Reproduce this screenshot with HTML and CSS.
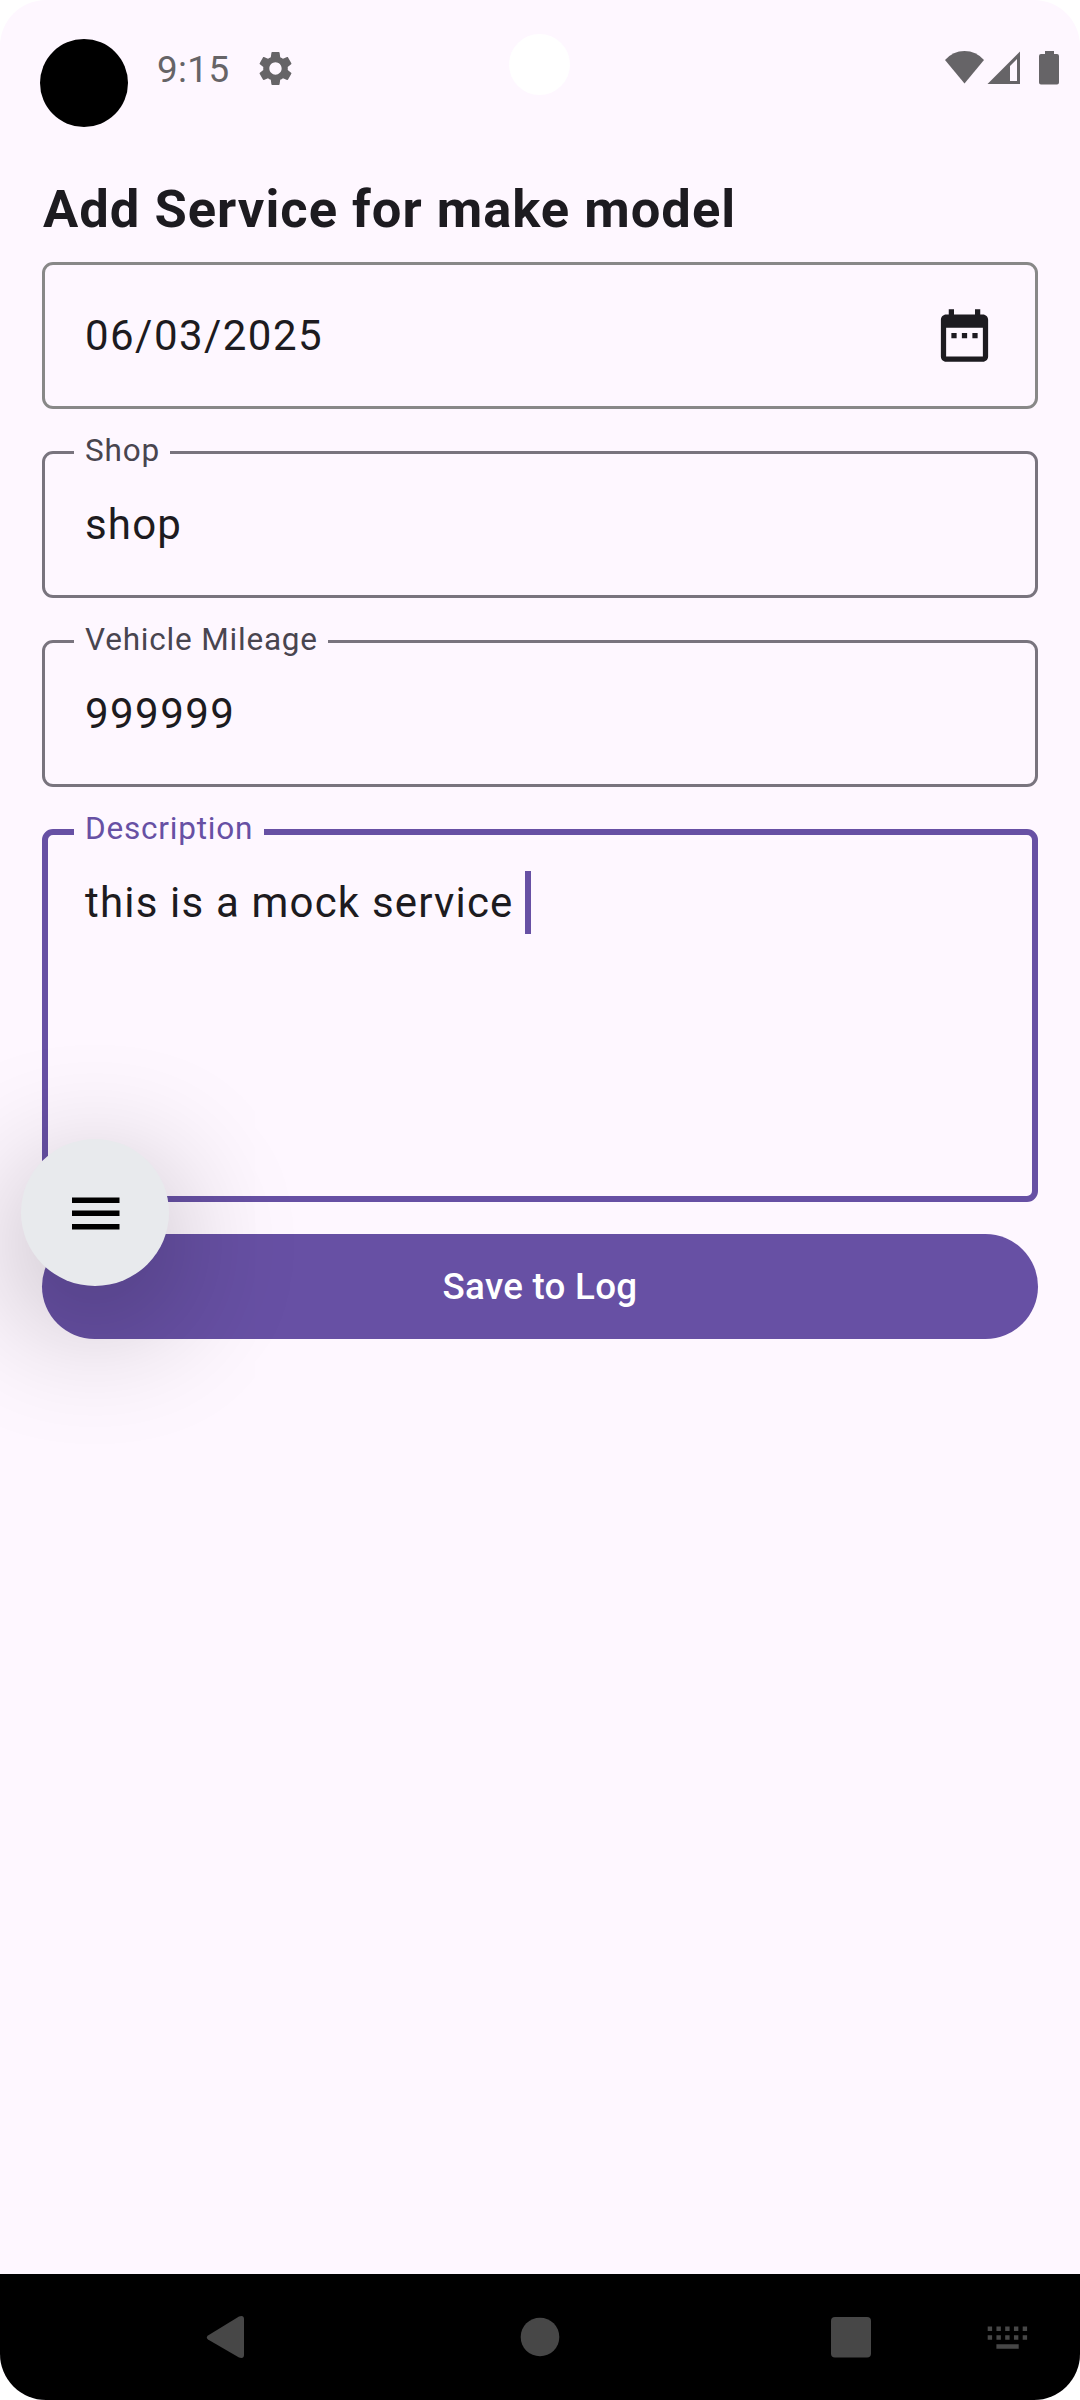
FILE: index.html
```html
<!DOCTYPE html>
<html lang="en">
<head>
<meta charset="utf-8">
<title>Add Service</title>
<link rel="stylesheet" href="styles.css">
</head>
<body>
<div class="screen">
  <header class="status">
    <div class="status-left">
      <span class="dot"></span>
      <span class="time">9:15</span>
      <svg class="gear" viewBox="0 0 24 24"><path d="M19.14 12.94c.04-.3.06-.61.06-.94 0-.32-.02-.64-.07-.94l2.03-1.58c.18-.14.23-.41.12-.61l-1.92-3.32c-.12-.22-.37-.29-.59-.22l-2.39.96c-.5-.38-1.03-.7-1.62-.94l-.36-2.54c-.04-.24-.24-.41-.48-.41h-3.84c-.24 0-.43.17-.47.41l-.36 2.54c-.59.24-1.13.57-1.62.94l-2.39-.96c-.22-.08-.47 0-.59.22L2.74 8.87c-.12.21-.08.47.12.61l2.03 1.58c-.05.3-.09.63-.09.94s.02.64.07.94l-2.03 1.58c-.18.14-.23.41-.12.61l1.92 3.32c.12.22.37.29.59.22l2.39-.96c.5.38 1.03.7 1.62.94l.36 2.54c.05.24.24.41.48.41h3.84c.24 0 .44-.17.47-.41l.36-2.54c.59-.24 1.13-.56 1.62-.94l2.39.96c.22.08.47 0 .59-.22l1.92-3.32c.12-.22.07-.47-.12-.61l-2.01-1.58zM12 15.6c-1.98 0-3.6-1.62-3.6-3.6s1.62-3.6 3.6-3.6 3.6 1.62 3.6 3.6-1.62 3.6-3.6 3.6z"/></svg>
    </div>
    <span class="camera"></span>
    <svg class="signals" width="114" height="34" viewBox="0 0 114 34">
      <path d="M0 9Q8 0 19.500 0T39 9L19.500 32.500Z"/>
      <path fill-rule="evenodd" d="M42.500 33L75 .5V33ZM65 30H72V8L65 15Z"/>
      <path d="M100 0h9v3h3a2 2 0 0 1 2 2v26.500a2 2 0 0 1-2 2H96a2 2 0 0 1-2-2V5a2 2 0 0 1 2-2h4z"/>
    </svg>
  </header>

  <main class="form">
    <h1 class="title">Add Service for make model</h1>
    <div class="field field-date">
      <span class="value value-digits">06/03/2025</span>
      <svg class="calendar" viewBox="0 0 24 24"><path d="M9 11H7v2h2v-2zm4 0h-2v2h2v-2zm4 0h-2v2h2v-2zm2-7h-1V2h-2v2H8V2H6v2H5c-1.110 0-1.990.9-1.990 2L3 20c0 1.100.89 2 2 2h14c1.100 0 2-.9 2-2V6c0-1.100-.9-2-2-2zm0 16H5V9h14v11z"/></svg>
    </div>
    <div class="field">
      <span class="label">Shop</span>
      <span class="value">shop</span>
    </div>
    <div class="field">
      <span class="label">Vehicle Mileage</span>
      <span class="value value-digits">999999</span>
    </div>
    <div class="field field-focused">
      <span class="label">Description</span>
      <span class="value">this is a mock service </span><span class="caret"></span>
    </div>
    <button class="save">Save to Log</button>
  </main>

  <div class="fab">
    <svg width="48" height="33" viewBox="0 0 48 33"><path d="M0 .5h47.500v5.500H0zM0 13.500h47.500v5.500H0zM0 27h47.500v5.500H0z"/></svg>
  </div>

  <nav class="nav">
    <svg width="1080" height="126" viewBox="0 0 1080 126">
      <path d="M208 61.500L239 42.500Q244 41 244 45V81Q244 85 239 83.500L208 65.500Q205.500 63.500 208 61.500Z"/>
      <circle cx="540" cy="63" r="19.300"/>
      <rect x="831" y="43" width="40" height="40.500" rx="4"/>
      <path d="M987.700 52.500h4.400v4.500h-4.400zm8.750 0h4.400v4.500h-4.400zm8.750 0h4.400v4.500h-4.400zm8.750 0h4.400v4.500h-4.400zm8.750 0h4.400v4.500h-4.400zM987.700 61.300h4.400v4.500h-4.400zm8.750 0h4.400v4.500h-4.400zm8.750 0h4.400v4.500h-4.400zm8.750 0h4.400v4.500h-4.400zm8.750 0h4.400v4.500h-4.400zM996.400 70.200h22.300v4.600h-22.300z"/>
    </svg>
  </nav>
</div>
</body>
</html>
```
FILE: styles.css
```css
* { box-sizing: border-box; }

body {
  margin: 0;
  background: #fff;
  font-family: Roboto, sans-serif;
  color: #1d1b20;
}

svg { display: block; }

.screen {
  position: relative;
  display: flex;
  flex-direction: column;
  width: 1080px;
  height: 2400px;
  overflow: hidden;
  border-radius: 46px;
  background: #fef7ff;
}

.status {
  position: relative;
  display: flex;
  justify-content: space-between;
  align-items: flex-start;
  height: 136px;
  padding: 39px 21px 0 40px;
  color: #666467;
  fill: #666467;
}

.status-left { display: flex; align-items: flex-start; }

.dot {
  width: 88px;
  height: 88px;
  border-radius: 50%;
  background: #000;
}

.time {
  width: 98px;
  margin: 9px 0 0 29px;
  font-size: 36.75px;
  line-height: 43px;
  letter-spacing: 0.4px;
}

.gear { width: 41px; height: 41px; margin: 8.5px 0 0 0; }

.signals { margin-top: 12px; }

.camera {
  position: absolute;
  left: 509px;
  top: 34px;
  width: 61px;
  height: 61px;
  border-radius: 50%;
  background: #fff;
}

.form {
  display: flex;
  flex: 1;
  flex-direction: column;
  padding: 0 42px;
}

.title {
  height: 126px;
  margin: 0;
  padding: 37px 0 0 1px;
  font-size: 52.5px;
  font-weight: 700;
  line-height: 73px;
  letter-spacing: 1px;
  white-space: nowrap;
}

.field {
  position: relative;
  display: flex;
  align-items: flex-start;
  height: 147px;
  margin-bottom: 42px;
  padding: 39px 39px 39px 40px;
  border: 3px solid #79747e;
  border-radius: 11px;
}

.field-date {
  justify-content: space-between;
  border-color: #888;
}

.field-focused {
  height: 373px;
  margin-bottom: 32px;
  padding: 36px 36px 36px 37px;
  border: 6px solid #6750a4;
}

.label {
  position: absolute;
  left: 29px;
  top: -24px;
  padding: 0 10.5px 0 11px;
  background: #fef7ff;
  color: #49454f;
  font-size: 31.5px;
  line-height: 42px;
  letter-spacing: 0.8px;
}

.field-focused .label {
  left: 26px;
  top: -27px;
  color: #6750a4;
}

.value {
  font-size: 42px;
  line-height: 63px;
  letter-spacing: 1.18px;
  white-space: pre;
}

.value-digits { letter-spacing: 1.45px; }

.calendar { width: 63px; height: 63px; fill: #1d1b20; }

.caret { width: 5.5px; height: 63px; background: #6750a4; }

.save {
  height: 105px;
  border: 0;
  border-radius: 53px;
  background: #6750a4;
  color: #fff;
  font: 500 36.75px/52px Roboto, sans-serif;
  letter-spacing: 0.26px;
}

.fab {
  position: absolute;
  left: 21px;
  top: 1139px;
  display: flex;
  align-items: center;
  justify-content: center;
  width: 148px;
  height: 147px;
  padding: 2px 0 0 1px;
  border-radius: 50%;
  background: #e8eaed;
  box-shadow: 0 32px 135px rgba(0, 0, 0, 0.32);
}

.nav {
  height: 126px;
  background: #000;
  fill: #474747;
}
```
